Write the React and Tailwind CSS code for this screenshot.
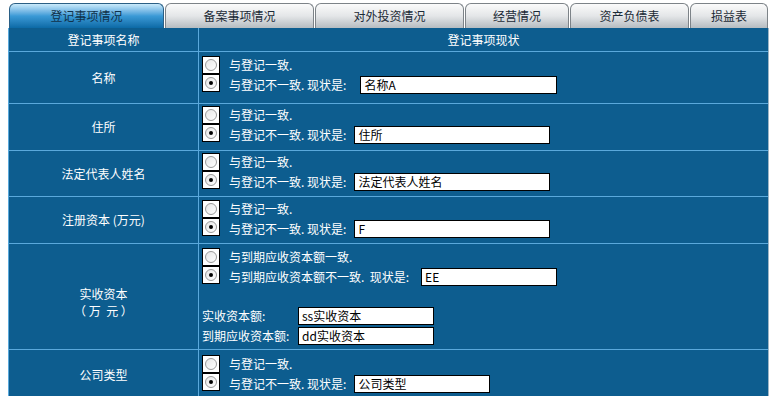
import React from "react";

const FONT = { fontFamily: '"Noto Sans CJK SC", "Noto Sans", sans-serif' };

function Radio({ checked }) {
  return (
    <div className="w-[18px] h-[18px] bg-white border border-black flex items-center justify-center shrink-0">
      <div className="w-[12px] h-[12px] rounded-full border border-[#9a9a9a] bg-gradient-to-br from-[#e6e6e6] to-white flex items-center justify-center">
        {checked && <div className="w-[4px] h-[4px] rounded-full bg-black" />}
      </div>
    </div>
  );
}

function Input({ value, w }) {
  return (
    <div
      className="h-[18px] bg-white border border-black text-black text-[12px] leading-[16px] pl-[3px] overflow-hidden whitespace-nowrap"
      style={{ width: w }}
    >
      {value}
    </div>
  );
}

function Choice({ same, diff, value, w, gap = 0, pt = "pt-[4px]" }) {
  return (
    <div className={`flex flex-col ${pt}`}>
      <div className="flex items-center h-[18px]">
        <Radio />
        <span className="ml-[9px] whitespace-pre">{same}</span>
      </div>
      <div className="flex items-start h-[20px]">
        <Radio checked />
        <div className="flex items-center h-[20px] pt-[2px]">
          <span className="ml-[9px] whitespace-pre">{diff}</span>
          <span style={{ width: gap }} />
          <Input value={value} w={w} />
        </div>
      </div>
    </div>
  );
}

const tabs = [
  { t: "登记事项情况", w: 155, active: true },
  { t: "备案事项情况", w: 149 },
  { t: "对外投资情况", w: 149 },
  { t: "经营情况", w: 104 },
  { t: "资产负债表", w: 119 },
  { t: "损益表", w: 78 },
];

function Row({ h, label, children }) {
  return (
    <div className="flex border-b border-[#5aa9dc]" style={{ height: h }}>
      <div className="w-[190px] shrink-0 border-r border-[#5aa9dc] flex items-center justify-center">
        {label}
      </div>
      <div className="flex-1 pl-[3px]">{children}</div>
    </div>
  );
}

export default function App() {
  return (
    <div className="w-[780px] h-[396px] bg-white overflow-hidden text-[12px] text-white" style={FONT}>
      <div className="flex pl-[9px] pt-[3px] gap-[1px]">
        {tabs.map((tab) => (
          <div
            key={tab.t}
            className={`h-[25px] rounded-t-[6px] border border-b-0 flex items-center justify-center text-[12px] ${
              tab.active
                ? "border-[#2a5f85] bg-gradient-to-b from-[#c9eafb] via-[#3a9ad6] to-[#0b6aa6] text-[#10324a]"
                : "border-[#7d8388] bg-gradient-to-b from-[#fbfbfb] via-[#e4e6e8] to-[#b6bcc1] text-[#1b2a36]"
            }`}
            style={{ width: tab.w }}
          >
            {tab.t}
          </div>
        ))}
      </div>
      <div className="ml-[8px] w-[761px] bg-[#0d5d8f] border-l border-[#5aa9dc] border-r border-r-[#9fb6c6]">
        <div className="flex border-b border-[#5aa9dc] h-[24px]">
          <div className="w-[190px] shrink-0 border-r border-[#5aa9dc] flex items-center justify-center">
            登记事项名称
          </div>
          <div className="flex-1 flex items-center justify-center">登记事项现状</div>
        </div>
        <Row h={52} label="名称">
          <Choice same="与登记一致." diff="与登记不一致. 现状是:" value="名称A" w={197} gap={14} />
        </Row>
        <Row h={47} label="住所">
          <Choice same="与登记一致." diff="与登记不一致. 现状是:" value="住所" w={196} gap={8} pt="pt-[2px]" />
        </Row>
        <Row h={46} label="法定代表人姓名">
          <Choice same="与登记一致." diff="与登记不一致. 现状是:" value="法定代表人姓名" w={196} gap={8} pt="pt-[2px]" />
        </Row>
        <Row h={47} label="注册资本 (万元)">
          <Choice same="与登记一致." diff="与登记不一致. 现状是:" value="F" w={196} gap={8} pt="pt-[3px]" />
        </Row>
        <Row
          h={106}
          label={
            <div className="flex flex-col items-center leading-[17px] pt-[10px]">
              <span>实收资本</span>
              <span className="whitespace-pre">（ 万  元 ）</span>
            </div>
          }
        >
          <Choice
            same="与到期应收资本额一致."
            diff="与到期应收资本额不一致.  现状是:"
            value="EE"
            w={136}
            gap={12}
          />
          <div className="mt-[20px] flex items-center h-[19px]">
            <span className="w-[96px]">实收资本额:</span>
            <Input value="ss实收资本" w={136} />
          </div>
          <div className="mt-[1px] flex items-center h-[19px]">
            <span className="w-[96px]">到期应收资本额:</span>
            <Input value="dd实收资本" w={136} />
          </div>
        </Row>
        <Row h={50} label="公司类型">
          <Choice same="与登记一致." diff="与登记不一致. 现状是:" value="公司类型" w={136} gap={8} pt="pt-[5px]" />
        </Row>
      </div>
    </div>
  );
}
